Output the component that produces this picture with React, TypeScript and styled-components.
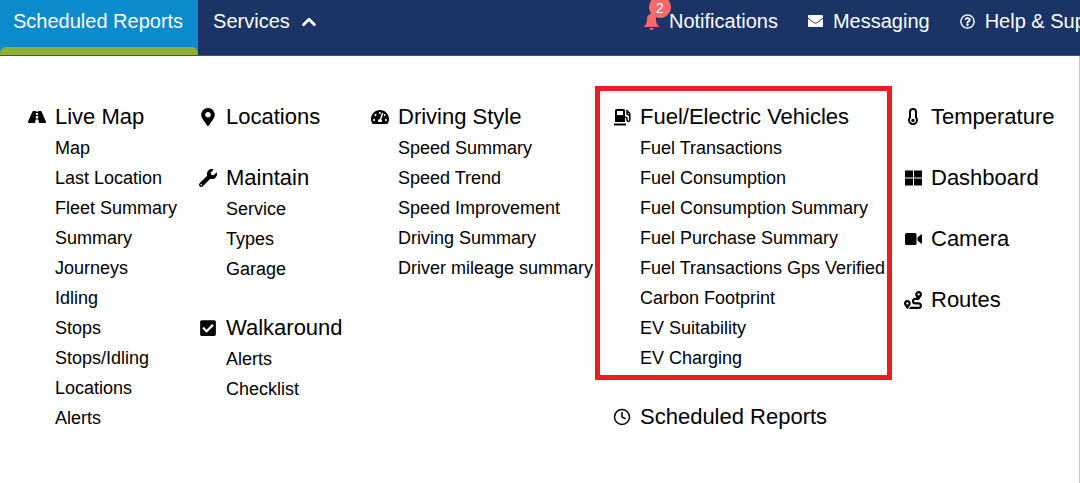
import React from 'react';
import styled, { createGlobalStyle } from 'styled-components';
import {
  FaRoad,
  FaMapMarkerAlt,
  FaWrench,
  FaCheckSquare,
  FaTachometerAlt,
  FaRoute,
  FaRegQuestionCircle,
} from 'react-icons/fa';
import { FiClock } from 'react-icons/fi';
import { ChevronUp } from 'lucide-react';

const GlobalStyle = createGlobalStyle`
  *, *::before, *::after { box-sizing: border-box; }
  html, body, #root { height: 100%; }
  body {
    margin: 0;
    background: #fff;
    color: #000;
    font-family: "Liberation Sans", Arial, sans-serif;
  }
  button { font: inherit; }
`;

const Page = styled.div`
  display: flex;
  flex-direction: column;
  min-height: 100%;
`;

const TopBar = styled.header`
  display: flex;
  justify-content: space-between;
  height: 56px;
  overflow: hidden;
  background: #1b3466;
  border-bottom: 1px solid #3c5273;
  color: #fff;
  font-size: 20px;
  line-height: 24px;
  white-space: nowrap;
`;

const NavGroup = styled.nav`
  display: flex;
  flex: none;
`;

const ActiveTab = styled.a`
  display: flex;
  flex-direction: column;
  justify-content: space-between;
  height: 56px;
  padding-top: 9px;
  background: #0c8bcc;
  color: inherit;
  text-decoration: none;

  span { padding: 0 15px 0 13px; }

  &::after {
    content: '';
    height: 9px;
    background: #8fb131;
    border-radius: 6px 6px 0 0;
  }
`;

const ServicesButton = styled.button`
  display: flex;
  align-items: center;
  align-self: flex-start;
  gap: 8px;
  padding: 9px 15px;
  border: 0;
  background: none;
  color: inherit;
  line-height: 24px;

  svg { margin-top: 2px; }
`;

const Utilities = styled.nav`
  display: flex;
  flex: 0 1 436px;
  gap: 30px;
  min-width: 0;
  padding-top: 9px;
`;

const UtilityLink = styled.a`
  display: flex;
  flex: none;
  align-items: center;
  align-self: flex-start;
  gap: 10px;
  color: inherit;
  text-decoration: none;
`;

const Bell = styled.span`
  position: relative;
  display: flex;
  color: #f9696b;
`;

const Badge = styled.span`
  position: absolute;
  left: 5px;
  bottom: 12px;
  width: 22px;
  height: 22px;
  border-radius: 50%;
  background: #f9696b;
  color: #fff;
  font-size: 14px;
  line-height: 24px;
  text-align: center;
`;

const MegaMenu = styled.main`
  display: grid;
  flex: 1;
  grid-template-columns:
    minmax(0, 171fr) minmax(0, 172fr) minmax(0, 242fr) minmax(0, 291fr) minmax(0, 175fr);
  align-items: start;
  padding: 43px 0 0 28px;
  border-right: 1px solid #c8c8c8;
  white-space: nowrap;
`;

const Column = styled.div`
  display: flex;
  flex-direction: column;
  gap: 27px;
`;

const Section = styled.section<{ $highlighted?: boolean }>`
  ${({ $highlighted }) =>
    $highlighted &&
    `
    margin: -13px 12px -8px -18px;
    padding: 8px 0 3px 13px;
    border: 5px solid #ed1c24;
  `}
`;

const Heading = styled.h2`
  display: flex;
  align-items: center;
  gap: 9px;
  margin: 0;
  padding-top: 2px;
  font-size: 22px;
  font-weight: 400;
  line-height: 32px;

  svg {
    flex: none;
    width: 18px;
    height: 18px;
  }
`;

const MenuLink = styled.a`
  color: inherit;
  text-decoration: none;
`;

const LinkList = styled.ul`
  margin: 0 0 -1px;
  padding: 0 0 0 27px;
  list-style: none;
  font-size: 18px;
  line-height: 30px;
`;

const FuelIcon = () => (
  <svg viewBox="0 0 18 18" aria-hidden="true">
    <path
      fill="currentColor"
      fillRule="evenodd"
      d="M3.6 1h6.8a1.6 1.6 0 0 1 1.6 1.6V14H2V2.600A1.600 1.600 0 0 1 3.600 1zM4 3v4h6V3z"
    />
    <path fill="currentColor" d="M1 15.500h12V17.500H1z" />
    <path
      fill="none"
      stroke="currentColor"
      strokeWidth="1.500"
      d="M11.500 9.200h1c1 0 1.500.6 1.500 1.500V12a1.400 1.400 0 0 0 2.800 0V5.500L13.300 2M14 3.500V6l2.800 1.600"
    />
  </svg>
);

const ThermometerIcon = () => (
  <svg viewBox="0 0 18 18" aria-hidden="true">
    <path
      fill="none"
      stroke="currentColor"
      strokeWidth="2"
      d="M6 4a3 3 0 0 1 6 0v5.500a4 4 0 1 1-6 0z"
    />
    <circle cx="9" cy="12.500" r="1.700" fill="currentColor" />
  </svg>
);

const DashboardIcon = () => (
  <svg viewBox="0 0 18 18" aria-hidden="true">
    <path
      fill="currentColor"
      d="M1 1.500h8v7H1zM10 1.500h8v7h-8zM1 9.500h8v7H1zM10 9.500h8v7h-8z"
    />
  </svg>
);

const CameraIcon = () => (
  <svg viewBox="0 0 18 18" aria-hidden="true">
    <rect x="1" y="3" width="11.500" height="12" rx="1.500" fill="currentColor" />
    <path fill="currentColor" d="M13.500 7.500L17 4.500q1-.6 1 .5v8q0 1.100-1 .5l-3.500-3z" />
  </svg>
);

const EnvelopeIcon = () => (
  <svg width="15" height="15" viewBox="0 0 15 15" aria-hidden="true">
    <rect y="1" width="15" height="12" rx="1" fill="currentColor" />
    <path
      fill="none"
      stroke="#1b3466"
      d="M0 4.200l5.500 4.300q2 1.400 4 0L15 4.200"
    />
  </svg>
);

const BellIcon = () => (
  <svg width="15" height="17" viewBox="0 0 15 17" aria-hidden="true">
    <path
      fill="currentColor"
      d="M7.500 0q1 0 1 1.100C11 1.600 12 3.500 12 6c0 4 1.200 6 3 7.500V14H0v-.5C1.800 12 3 10 3 6c0-2.500 1-4.400 3.500-4.900Q6.500 0 7.500 0zM5.300 15h4.400a2.200 2 0 0 1-4.400 0z"
    />
  </svg>
);

type MenuSection = {
  title: string;
  icon: React.ComponentType;
  links?: string[];
  highlighted?: boolean;
};

const columns: MenuSection[][] = [
  [
    {
      title: 'Live Map',
      icon: FaRoad,
      links: [
        'Map',
        'Last Location',
        'Fleet Summary',
        'Summary',
        'Journeys',
        'Idling',
        'Stops',
        'Stops/Idling',
        'Locations',
        'Alerts',
      ],
    },
  ],
  [
    { title: 'Locations', icon: FaMapMarkerAlt },
    { title: 'Maintain', icon: FaWrench, links: ['Service', 'Types', 'Garage'] },
    { title: 'Walkaround', icon: FaCheckSquare, links: ['Alerts', 'Checklist'] },
  ],
  [
    {
      title: 'Driving Style',
      icon: FaTachometerAlt,
      links: [
        'Speed Summary',
        'Speed Trend',
        'Speed Improvement',
        'Driving Summary',
        'Driver mileage summary',
      ],
    },
  ],
  [
    {
      title: 'Fuel/Electric Vehicles',
      icon: FuelIcon,
      highlighted: true,
      links: [
        'Fuel Transactions',
        'Fuel Consumption',
        'Fuel Consumption Summary',
        'Fuel Purchase Summary',
        'Fuel Transactions Gps Verified',
        'Carbon Footprint',
        'EV Suitability',
        'EV Charging',
      ],
    },
    { title: 'Scheduled Reports', icon: FiClock },
  ],
  [
    { title: 'Temperature', icon: ThermometerIcon },
    { title: 'Dashboard', icon: DashboardIcon },
    { title: 'Camera', icon: CameraIcon },
    { title: 'Routes', icon: FaRoute },
  ],
];

export default function App() {
  return (
    <Page>
      <GlobalStyle />
      <TopBar>
        <NavGroup aria-label="Main">
          <ActiveTab href="#reports">
            <span>Scheduled Reports</span>
          </ActiveTab>
          <ServicesButton type="button" aria-expanded="true">
            Services
            <ChevronUp size={22} strokeWidth={3} />
          </ServicesButton>
        </NavGroup>
        <Utilities aria-label="Account">
          <UtilityLink href="#notifications">
            <Bell>
              <BellIcon />
              <Badge>2</Badge>
            </Bell>
            Notifications
          </UtilityLink>
          <UtilityLink href="#messaging">
            <EnvelopeIcon />
            Messaging
          </UtilityLink>
          <UtilityLink href="#help">
            <FaRegQuestionCircle size={15} />
            Help &amp; Support
          </UtilityLink>
        </Utilities>
      </TopBar>
      <MegaMenu>
        {columns.map((sections, index) => (
          <Column key={index}>
            {sections.map(({ title, icon: Icon, links, highlighted }) => (
              <Section key={title} $highlighted={highlighted}>
                <Heading>
                  <Icon />
                  <MenuLink href="#menu">{title}</MenuLink>
                </Heading>
                {links && (
                  <LinkList>
                    {links.map((link) => (
                      <li key={link}>
                        <MenuLink href="#menu">{link}</MenuLink>
                      </li>
                    ))}
                  </LinkList>
                )}
              </Section>
            ))}
          </Column>
        ))}
      </MegaMenu>
    </Page>
  );
}
